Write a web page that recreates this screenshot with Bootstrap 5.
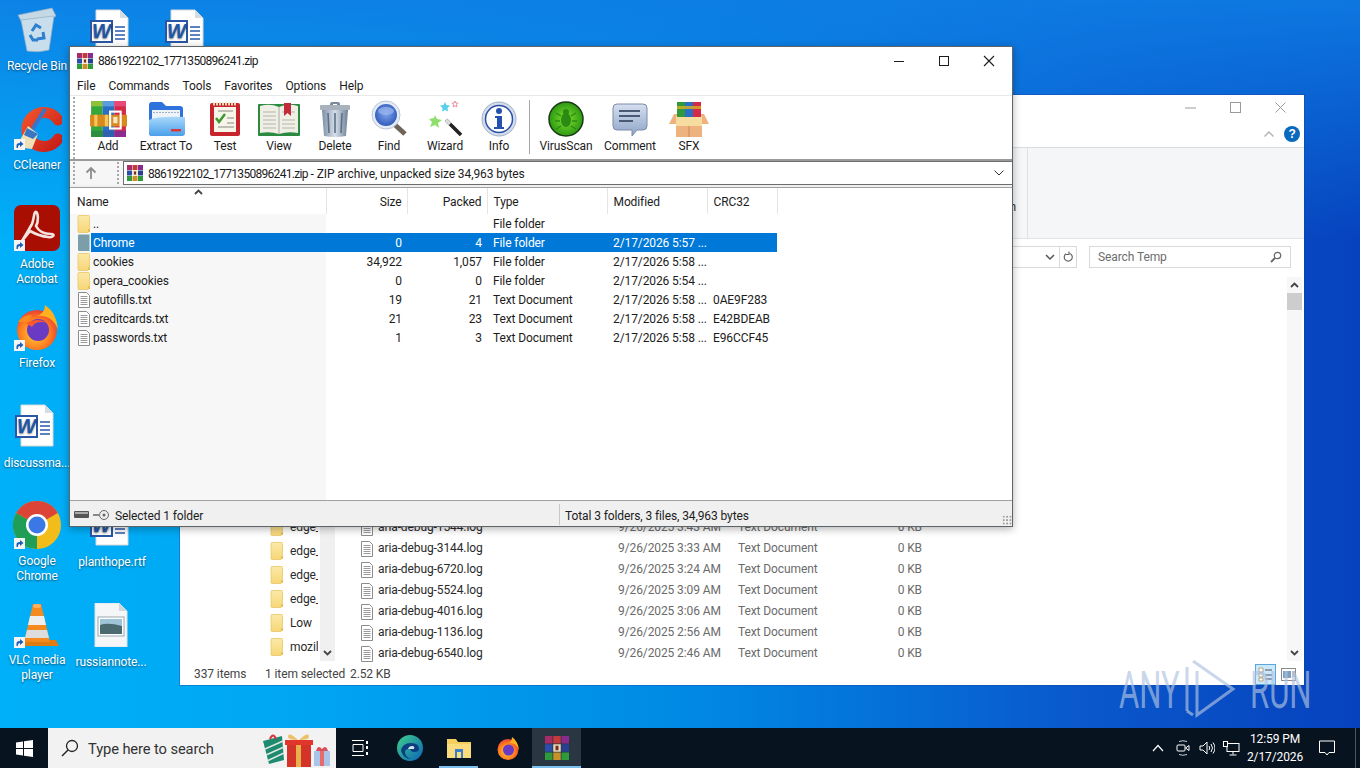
<!DOCTYPE html>
<html lang="en">
<head>
<meta charset="UTF-8">
<meta name="viewport" content="width=device-width, initial-scale=1.0">
<title>8861922102_1771350896241.zip</title>
<link href="https://cdn.jsdelivr.net/npm/bootstrap@5.3.2/dist/css/bootstrap.min.css" rel="stylesheet">
<style>
html, body { margin: 0; height: 100%; overflow: hidden; }
body { font-family: Roboto, "Noto Sans", sans-serif; font-size: 12px; line-height: 1.25; color: #1c1c1c; letter-spacing: -.1px; }
svg { flex-shrink: 0; }
.zipname { letter-spacing: -.7px; }
.screen { position: relative; width: 1360px; height: 768px; overflow: hidden;
  background: linear-gradient(90deg, #00b0f8 0, #00a6f2 300px, #0088e4 700px, #0a58cc 1080px, #0642bd 1360px); }
.topshade { position: absolute; left: 0; top: 0; right: 0; height: 240px; background: linear-gradient(180deg, rgba(14,125,228,.9), rgba(14,125,228,0)); }

/* desktop icons */
.dicon { position: absolute; width: 74px; color: #fff; text-align: center; line-height: 15px; text-shadow: 0 1px 2px rgba(0,0,0,.55); }
.dicon svg { display: block; margin: 0 auto 6px; }
.d-chrome svg, .d-vlc svg, .d-plan svg, .d-russ svg { margin-bottom: 5px; }
.d-recycle { left: 0; top: 7px; } .d-cclean { left: 0; top: 106px; } .d-acro { left: 0; top: 205px; }
.d-ff { left: 0; top: 304px; } .d-disc { left: 0; top: 404px; } .d-chrome { left: 0; top: 501px; }
.d-vlc { left: 0; top: 602px; } .d-w1 { left: 75px; top: 9px; } .d-w2 { left: 150px; top: 9px; }
.d-plan { left: 75px; top: 503px; } .d-russ { left: 74px; top: 603px; }

/* explorer behind */
.xwin { position: absolute; left: 180px; top: 95px; width: 1124px; height: 590px; background: #fff; box-shadow: 0 0 0 1px rgba(20,60,150,.35); }
.xtitle { height: 25px; padding-right: 18px; gap: 34px; }
.xtabs { height: 28px; border-bottom: 1px solid #dadbdc; padding-right: 4px; gap: 10px; }
.xhelp { width: 16px; height: 16px; border-radius: 50%; background: #0a68bd; color: #fff; font: bold 12px/16px "Liberation Sans", sans-serif; text-align: center; }
.xribbon { height: 91px; background: #f5f6f7; border-bottom: 1px solid #e2e3e4; }
.xribbon-frag { width: 847px; text-align: right; padding: 52px 11px 0 0; color: #333; }
.xribbon-sep { width: 1px; background: #e0e1e2; }
.xaddr { height: 38px; padding: 7px 13px 0 0; }
.xaddr-box { width: 66px; height: 22px; border: 1px solid #d9d9d9; border-left: 0; }
.xrefresh { width: 17px; border-left: 1px solid #d9d9d9; }
.xsearch { width: 202px; height: 22px; margin-left: 12px; border: 1px solid #d9d9d9; padding: 0 8px; color: #6d6d6d; }
.xbody { height: 387px; }
.xtree { width: 140px; padding: 0 2px 5px 0; }
.xtree-row { height: 24px; padding-left: 90px; gap: 6px; white-space: nowrap; overflow: hidden; color: #2a2a2a; }
.xscroll-v { width: 15px; background: #f0f0f0; margin-bottom: 3px; }
.xfiles { width: 771px; padding-bottom: 0; }
.xfile { height: 21px; color: #6b6b6b; white-space: nowrap; }
.xfile-name { width: 283px; padding-left: 25px; gap: 4px; color: #2a2a2a; }
.xfile-date { width: 120px; } .xfile-type { width: 140px; }
.xfile-size { width: 44px; text-align: right; }
.xscroll-main { width: 15px; margin-left: auto; margin-right: 2px; margin-bottom: 3px; background: #f7f7f7; }
.xthumb { width: 15px; height: 17px; background: #cdcdcd; }
.xarrow { height: 16px; }
.xstatus { height: 21px; padding-left: 14px; color: #444; white-space: nowrap; }
.xs-a { width: 71px; } .xs-b { width: 85px; }
.xview { margin-left: auto; margin-right: 8px; gap: 4px; }
.xview-on { width: 21px; height: 21px; background: #cce8ff; border: 1px solid #5aa8d8; }
.xview-off { width: 16px; height: 21px; }

/* winrar window */
.rwin { position: absolute; left: 69px; top: 46px; width: 944px; height: 481px; background: #f0f0f0; border: 1px solid #5f6468; box-shadow: 0 2px 8px rgba(0,0,0,.3); }
.rtitle { height: 27px; background: #fff; padding: 0 16px 0 7px; gap: 5px; }
.rtitle > span { padding-top: 2px; }
.rctrls { gap: 31px; }
.rmenu { height: 22px; background: #fff; padding: 4px 0 0 7px; gap: 13px; border-bottom: 1px solid #e8e8e8; }
.rtools { height: 65px; padding-left: 15px; border-bottom: 2px solid #9a9a9a;
  background: #fff radial-gradient(circle, #a8a8a8 .8px, transparent 1px) 3px 0 / 2px 4px repeat-y;
  display: grid; grid-template-columns: 46px 70px 48px 60px 52px 56px 56px 52px 10px 62px 66px 52px; }
.rtool { text-align: center; padding-top: 4px; white-space: nowrap; }
.rtool svg { display: block; margin: 0 auto; height: 38px; width: 38px; }
.rtool .rwide { width: 44px; margin-left: 50%; transform: translateX(-50%); }
.rtool span { display: block; line-height: 15px; margin-top: 1px; }
.rsep { width: 1px; height: 54px; margin: 4px 0 0 4px; background: #a8a8a8; }
.raddr { height: 24px; background: #f6f6f6; }
.rup { width: 53px; padding: 4px 0 0 15px; background: radial-gradient(circle, #a8a8a8 .8px, transparent 1px) 47px 0 / 2px 4px repeat-y, radial-gradient(circle, #a8a8a8 .8px, transparent 1px) 3px 0 / 2px 4px repeat-y; }
.rfield { flex: 1; height: 24px; background: #fff; border: 1px solid #6d6d6d; border-right: 0; padding: 0 8px 0 3px; gap: 5px; }
.rfield > span { padding-top: 2px; }
.rgap { height: 3px; background: #f0f0f0; border-bottom: 1px solid #a0a0a0; }
.rlist { height: 313px; background: linear-gradient(90deg, #f7f7f7 256px, #fff 256px); border-bottom: 1px solid #a0a0a0; }
.rlist table { width: 707px; table-layout: fixed; margin: 0; --bs-table-bg: transparent; color: #1c1c1c; }
.rlist th, .rlist td { height: 19px; padding: 1px 5px 0 6px; font-weight: 400; border: 0; line-height: 18px; white-space: nowrap; overflow: hidden; vertical-align: middle; color: #1c1c1c; box-shadow: none; background: transparent; }
.rlist td.rname { padding-top: 0; }
.rlist thead th { height: 26px; padding-top: 2px; background: #fff; border-right: 1px solid #e5e5e5; position: relative; }
.rname { padding-left: 7px !important; }
.rname-in { gap: 2px; height: 19px; }
.c-name { width: 256px; } .c-size { width: 81px; } .c-pack { width: 80px; } .c-type { width: 120px; } .c-mod { width: 100px; } .c-crc { width: 70px; }
.rlist .rsel td { background: #0078d7; color: #fff; }
.rlist .rsel td.rname { background: linear-gradient(90deg, transparent 21px, #0078d7 21px); }
.rsort { position: absolute; left: 124px; top: 1px; }
.rstatus { height: 24px; background: #f0f0f0; padding-top: 3px; }
.rst-a { width: 490px; padding-left: 4px; gap: 5px; border-right: 1px solid #c8c8c8; height: 100%; }
.rst-a span { padding-top: 4px; }
.rst-b { padding: 4px 0 0 5px; }
.rgrip { margin-left: auto; width: 10px; height: 10px; align-self: flex-end; background: radial-gradient(circle, #9a9a9a 1px, transparent 1.2px) 0 0 / 3.4px 3.4px; }

/* taskbar */
.tbar { position: absolute; left: 0; bottom: 0; width: 1360px; height: 40px; background: #07131f; color: #fff; }
.tstart { width: 48px; }
.tsearch { width: 288px; height: 40px; background: #f2f2f2; color: #333; font-size: 14.7px; padding-left: 13px; gap: 9px; position: relative; }
.tsearch > span { padding-top: 2px; }
.tgift { position: absolute; right: 2px; top: 3px; }
.tapp { width: 49px; height: 40px; position: relative; }
.tact::after { content: ""; position: absolute; left: 5px; right: 5px; bottom: 0; height: 2px; background: #7cc0f0; }
.tcur { background: #2a3742; }
.tcur::after { left: 0; right: 0; }
.ttray { margin-left: auto; height: 40px; }
.tico { width: 24.5px; }
.tclock { width: 62px; text-align: center; line-height: 18px; font-size: 12px; }
.tnote { width: 42px; }
.tend { width: 5px; height: 40px; border-left: 1px solid #4a5560; margin-left: 7px; }

/* watermark */
.wm { position: absolute; left: 1119px; top: 655px; width: 192px; height: 66px; color: rgba(175,195,225,.66); }
.wm-t { position: absolute; top: 8px; font: 400 52px/56px Roboto, sans-serif; transform: scaleX(.6); transform-origin: 0 50%; white-space: nowrap; }
.wm-l { left: 0; } .wm-r { left: 131px; }
.wm svg { position: absolute; left: 56px; top: 0; }
</style>
</head>
<body>
<!-- shared gradients and icons -->
<svg width="0" height="0" class="position-absolute">
  <defs>
    <linearGradient id="gFolder" x1="0" y1="0" x2="0" y2="1"><stop offset="0" stop-color="#fbe9a8"/><stop offset="1" stop-color="#f7d678"/></linearGradient>
    <linearGradient id="gBlue" x1="0" y1="0" x2="0" y2="1"><stop offset="0" stop-color="#a8d8fb"/><stop offset="1" stop-color="#4aa0ea"/></linearGradient>
    <linearGradient id="gBin" x1="0" y1="0" x2="1" y2="0"><stop offset="0" stop-color="#7d8fa5"/><stop offset=".5" stop-color="#d5dfe9"/><stop offset="1" stop-color="#6f8299"/></linearGradient>
    <radialGradient id="gLens" cx=".5" cy=".45" r=".6"><stop offset="0" stop-color="#7fa4ec"/><stop offset="1" stop-color="#2a55b8"/></radialGradient>
    <radialGradient id="gGreen" cx=".5" cy=".5" r=".6"><stop offset="0" stop-color="#7fe22a"/><stop offset="1" stop-color="#1c8a10"/></radialGradient>
    <linearGradient id="gCmt" x1="0" y1="0" x2="0" y2="1"><stop offset="0" stop-color="#d5dff0"/><stop offset="1" stop-color="#8ea4c6"/></linearGradient>
    <radialGradient id="gFox" cx=".45" cy=".6" r=".65"><stop offset="0" stop-color="#ffd23a"/><stop offset=".6" stop-color="#ff7a1f"/><stop offset="1" stop-color="#e5303c"/></radialGradient>
    <linearGradient id="gEdge" x1="0" y1="0" x2="1" y2="1"><stop offset="0" stop-color="#3fd08a"/><stop offset="1" stop-color="#0a62b8"/></linearGradient>
    <linearGradient id="gCc" x1="0" y1="0" x2="1" y2="1"><stop offset="0" stop-color="#f0502a"/><stop offset="1" stop-color="#c81e18"/></linearGradient>

    <symbol id="iRar" viewBox="0 0 36 36">
      <rect x="2" y="1" width="11" height="34" fill="#35a63a"/><rect x="13" y="1" width="11" height="34" fill="#2a6fc4"/><rect x="24" y="1" width="11" height="34" fill="#d42a4a"/>
      <rect x="2" y="1" width="11" height="5" fill="#8fc23a"/><rect x="13" y="1" width="11" height="5" fill="#5a9ee0"/><rect x="24" y="1" width="11" height="5" fill="#ea4a7a"/>
      <rect x="2" y="29" width="11" height="6" fill="#2c8f40"/><rect x="13" y="29" width="11" height="6" fill="#2e62b0"/><rect x="24" y="29" width="11" height="6" fill="#8c2a90"/>
      <rect x="1" y="14" width="35" height="11" fill="#d98a1e"/><rect x="5" y="14" width="3" height="11" fill="#f5c65a"/><rect x="15" y="14" width="3" height="11" fill="#f5c65a"/>
      <rect x="20" y="11" width="10" height="16" fill="none" stroke="#fff" stroke-width="2"/><rect x="23" y="16" width="4" height="6" fill="#f5e6c8"/>
    </symbol>
    <symbol id="iRarS" viewBox="0 0 16 16">
      <rect x="0" y="0" width="5" height="5" fill="#a82a66"/><rect x="5.5" y="0" width="5" height="5" fill="#c23a3a"/><rect x="11" y="0" width="5" height="5" fill="#8a2a8c"/>
      <rect x="0" y="5.5" width="5" height="5" fill="#2b4fa8"/><rect x="5.5" y="5.5" width="5" height="5" fill="#e8d9b8"/><rect x="11" y="5.5" width="5" height="5" fill="#27408f"/>
      <rect x="0" y="11" width="5" height="5" fill="#2f9a3c"/><rect x="5.5" y="11" width="5" height="5" fill="#c9902a"/><rect x="11" y="11" width="5" height="5" fill="#2f9a3c"/>
      <rect x="7" y="6.5" width="2" height="3" fill="#7a2a20"/>
    </symbol>
    <symbol id="iFolder" viewBox="0 0 14 18">
      <path d="M1 1.5Q1 .5 2 .5h9.5q1 0 1 1v13.5l-1.5 1v1.5H2q-1 0-1-1z" fill="url(#gFolder)" stroke="#eac766" stroke-width=".8"/>
      <rect x="11" y="14" width="2" height="3" fill="#e8c058"/>
    </symbol>
    <symbol id="iFolderSel" viewBox="0 0 14 18">
      <path d="M1 1.500Q1 .5 2 .5h10.500V17H2q-1 0-1-1z" fill="#7c9ea8"/>
    </symbol>
    <symbol id="iTxt" viewBox="0 0 14 16">
      <path d="M1.500 .5h8l3 3v12h-11z" fill="#fff" stroke="#8c8c8c"/>
      <path d="M3.500 4.500h7M3.500 6.500h7M3.500 8.500h7M3.500 10.500h7M3.500 12.500h7" stroke="#9a9a9a"/>
    </symbol>
    <symbol id="iWord" viewBox="0 0 44 44">
      <path d="M6 1h24l8 8v33H6z" fill="#fff" stroke="#d8d8d8"/><path d="M30 1v8h8z" fill="#d6dce4"/>
      <path d="M25 18h10M25 22h10M25 26h10M25 30h10" stroke="#2a5aa8" stroke-width="1.300"/>
      <rect x="1" y="12" width="21" height="21" fill="#fff" stroke="#2a56a6" stroke-width="2"/>
      <text x="11.500" y="29" text-anchor="middle" font-family="Liberation Sans, sans-serif" font-size="20" font-weight="700" font-style="italic" fill="#1e56a8">W</text>
    </symbol>
    <symbol id="iLink" viewBox="0 0 11 11">
      <rect width="11" height="11" fill="#f4f4f4"/><path d="M2.500 9V6.500Q2.500 4 5.500 4H6V2l3.500 3L6 8V6h-.5Q4 6 3.800 9z" fill="#1e5fb8"/>
    </symbol>
    <symbol id="iChevD" viewBox="0 0 9 6"><path d="M1 1l3.500 3.500L8 1" fill="none" stroke="#444" stroke-width="1.800"/></symbol>
    <symbol id="iChevU" viewBox="0 0 9 6"><path d="M1 5l3.500-3.500L8 5" fill="none" stroke="#444" stroke-width="1.800"/></symbol>
  </defs>
</svg>

<div class="screen">
  <div class="topshade"></div>

  <!-- desktop shortcuts -->
  <div class="dicon d-recycle">
    <svg width="44" height="46" viewBox="0 0 44 46"><path d="M3 8L37 1l4 8-3 2L7 16z" fill="#c4d8e6" stroke="#8ea8bc" stroke-width=".6"/><path d="M6 13l33-4-5 34q-10 3-22 1z" fill="#c9deec" stroke="#93aec2" stroke-width=".7"/><path d="M17 24l4-6 5 3M28 25l1 6-7 1M15 28l3 5h5" fill="none" stroke="#2f7fd0" stroke-width="3"/></svg>
    Recycle Bin
  </div>
  <div class="dicon d-cclean">
    <svg width="50" height="46" viewBox="0 0 50 46"><path d="M46 14A17 17 0 1 0 46 33" fill="none" stroke="url(#gCc)" stroke-width="11" stroke-linecap="round"/><path d="M33 3L20 24" stroke="#3f72c4" stroke-width="4"/><path d="M16 20l10 8-6 15-16-2z" fill="#efe0b8"/><path d="M15 22l11 6-5 5-9-4z" fill="#3a76c2"/></svg>
    CCleaner
  </div>
  <div class="dicon d-acro">
    <svg width="46" height="46" viewBox="0 0 46 46"><rect width="46" height="46" rx="7" fill="#a90e02"/><path d="M8 36q5-8 10-17c2-5 2-13 4-12s3 9 0 14q4 8 15 8c5 0 2 4-3 3q-9-1-18-6-8 10-8 10z" fill="none" stroke="#f4e4e0" stroke-width="2.600"/></svg>
    Adobe<br>Acrobat
  </div>
  <div class="dicon d-ff">
    <svg width="46" height="46" viewBox="0 0 46 46"><circle cx="23" cy="26" r="20" fill="url(#gFox)"/><path d="M31 1q12 8 13 25-6-16-22-14 9-2 9-11z" fill="#ffb01f"/><path d="M4 18q6-8 14-7l-4 7z" fill="#ff8a1f"/><circle cx="24" cy="26" r="11" fill="#6a3bc2"/><path d="M12 19q12-6 21 0-11-3-15 4z" fill="#ff5a2a"/></svg>
    Firefox
  </div>
  <div class="dicon d-disc">
    <svg width="44" height="44" viewBox="0 0 44 44"><use href="#iWord"/></svg>
    <span class="d-block mt-2">discussma...</span>
  </div>
  <div class="dicon d-chrome">
    <svg width="48" height="48" viewBox="0 0 48 48"><circle cx="24" cy="24" r="24" fill="#f2bd1a"/><path d="M24 24L3.200 12A24 24 0 0 1 44.800 12z" fill="#dc4437"/><path d="M24 24L3.200 12A24 24 0 0 0 24 48z" fill="#1f9e57"/><circle cx="24" cy="24" r="11" fill="#fff"/><circle cx="24" cy="24" r="8.500" fill="#3b78e7"/></svg>
    Google<br>Chrome
  </div>
  <div class="dicon d-vlc">
    <svg width="46" height="46" viewBox="0 0 46 46"><path d="M4 38h38l3 6H1z" fill="#e07c10"/><path d="M19 2h8l9 38H10z" fill="#f58a1f"/><path d="M16 14h14l2 9H14z" fill="#eee"/><path d="M13 28h20l2 8H11z" fill="#ddd"/><ellipse cx="23" cy="4" rx="4" ry="2" fill="#ffb060"/></svg>
    VLC media<br>player
  </div>
  <div class="dicon d-w1"><svg width="44" height="44" viewBox="0 0 44 44"><use href="#iWord"/></svg></div>
  <div class="dicon d-w2"><svg width="44" height="44" viewBox="0 0 44 44"><use href="#iWord"/></svg></div>
  <div class="dicon d-plan"><svg width="44" height="44" viewBox="0 0 44 44"><use href="#iWord"/></svg><span class="d-block mt-2">planthope.rtf</span></div>
  <div class="dicon d-russ">
    <svg width="34" height="44" viewBox="0 0 34 44"><path d="M1 0h24l8 8v36H1z" fill="#f4f6f8" stroke="#dfe3e6"/><path d="M25 0v8h8z" fill="#cfd6dc"/><rect x="4" y="14" width="26" height="19" fill="#fff" stroke="#9aa8b2"/><rect x="6" y="16" width="22" height="7" fill="#9ec4d8"/><path d="M6 22q8-3 22 1v8H6z" fill="#4a6a70"/></svg>
    <span class="d-block mt-2">russiannote...</span>
  </div>

  <!-- shortcut arrows over the desktop icons -->
  <svg class="position-absolute top-0 start-0" width="40" height="768" viewBox="0 0 40 768">
    <use href="#iLink" x="14" y="139" width="11" height="11"/>
    <use href="#iLink" x="14" y="240" width="11" height="11"/>
    <use href="#iLink" x="14" y="340" width="11" height="11"/>
    <use href="#iLink" x="14" y="538" width="11" height="11"/>
    <use href="#iLink" x="14" y="637" width="11" height="11"/>
  </svg>

  <!-- explorer window behind -->
  <div class="xwin d-flex flex-column">
    <div class="xtitle d-flex align-items-center justify-content-end">
      <svg width="11" height="11" viewBox="0 0 11 11"><path d="M0 6h11" stroke="#9a9a9a"/></svg>
      <svg width="11" height="11" viewBox="0 0 11 11"><rect x=".5" y=".5" width="10" height="10" fill="none" stroke="#9a9a9a"/></svg>
      <svg width="11" height="11" viewBox="0 0 11 11"><path d="M.5.5l10 10M10.500.5l-10 10" stroke="#9a9a9a"/></svg>
    </div>
    <div class="xtabs d-flex align-items-center justify-content-end">
      <svg width="10" height="6" viewBox="0 0 10 6"><path d="M.5 5.500L5 1l4.500 4.500" fill="none" stroke="#b5b5b5" stroke-width="1.500"/></svg>
      <div class="xhelp">?</div>
    </div>
    <div class="xribbon d-flex"><div class="xribbon-frag">h</div><div class="xribbon-sep"></div></div>
    <div class="xaddr d-flex justify-content-end">
      <div class="xaddr-box d-flex align-items-center justify-content-end">
        <svg class="me-1" width="10" height="7" viewBox="0 0 10 7"><path d="M1 1l4 4 4-4" fill="none" stroke="#555" stroke-width="1.500"/></svg>
        <div class="xrefresh h-100 d-flex align-items-center justify-content-center">
          <svg width="11" height="12" viewBox="0 0 11 12"><path d="M7 2.500a4 4 0 1 1-4 .3M6 .5v3h-3" fill="none" stroke="#666" stroke-width="1.200"/></svg>
        </div>
      </div>
      <div class="xsearch d-flex align-items-center justify-content-between">
        <span>Search Temp</span>
        <svg width="12" height="12" viewBox="0 0 12 12"><circle cx="7.500" cy="4.500" r="3.200" fill="none" stroke="#666" stroke-width="1.200"/><path d="M5 7l-4 4" stroke="#666" stroke-width="1.800"/></svg>
      </div>
    </div>
    <div class="xbody d-flex">
      <div class="xtree d-flex flex-column justify-content-end">
        <div class="xtree-row d-flex align-items-center"><svg width="14" height="18"><use href="#iFolder"/></svg>edge_</div>
        <div class="xtree-row d-flex align-items-center"><svg width="14" height="18"><use href="#iFolder"/></svg>edge_</div>
        <div class="xtree-row d-flex align-items-center"><svg width="14" height="18"><use href="#iFolder"/></svg>edge_</div>
        <div class="xtree-row d-flex align-items-center"><svg width="14" height="18"><use href="#iFolder"/></svg>edge_</div>
        <div class="xtree-row d-flex align-items-center"><svg width="14" height="18"><use href="#iFolder"/></svg>Low</div>
        <div class="xtree-row d-flex align-items-center"><svg width="14" height="18"><use href="#iFolder"/></svg>mozil</div>
      </div>
      <div class="xscroll-v d-flex flex-column justify-content-end"><div class="xarrow d-flex align-items-center justify-content-center"><svg width="9" height="6"><use href="#iChevD"/></svg></div></div>
      <div class="xfiles d-flex flex-column justify-content-end">
        <div class="xfile d-flex align-items-center"><div class="xfile-name d-flex align-items-center"><svg width="14" height="16"><use href="#iTxt"/></svg>aria-debug-1544.log</div><div class="xfile-date">9/26/2025 3:43 AM</div><div class="xfile-type">Text Document</div><div class="xfile-size">0 KB</div></div>
        <div class="xfile d-flex align-items-center"><div class="xfile-name d-flex align-items-center"><svg width="14" height="16"><use href="#iTxt"/></svg>aria-debug-3144.log</div><div class="xfile-date">9/26/2025 3:33 AM</div><div class="xfile-type">Text Document</div><div class="xfile-size">0 KB</div></div>
        <div class="xfile d-flex align-items-center"><div class="xfile-name d-flex align-items-center"><svg width="14" height="16"><use href="#iTxt"/></svg>aria-debug-6720.log</div><div class="xfile-date">9/26/2025 3:24 AM</div><div class="xfile-type">Text Document</div><div class="xfile-size">0 KB</div></div>
        <div class="xfile d-flex align-items-center"><div class="xfile-name d-flex align-items-center"><svg width="14" height="16"><use href="#iTxt"/></svg>aria-debug-5524.log</div><div class="xfile-date">9/26/2025 3:09 AM</div><div class="xfile-type">Text Document</div><div class="xfile-size">0 KB</div></div>
        <div class="xfile d-flex align-items-center"><div class="xfile-name d-flex align-items-center"><svg width="14" height="16"><use href="#iTxt"/></svg>aria-debug-4016.log</div><div class="xfile-date">9/26/2025 3:06 AM</div><div class="xfile-type">Text Document</div><div class="xfile-size">0 KB</div></div>
        <div class="xfile d-flex align-items-center"><div class="xfile-name d-flex align-items-center"><svg width="14" height="16"><use href="#iTxt"/></svg>aria-debug-1136.log</div><div class="xfile-date">9/26/2025 2:56 AM</div><div class="xfile-type">Text Document</div><div class="xfile-size">0 KB</div></div>
        <div class="xfile d-flex align-items-center"><div class="xfile-name d-flex align-items-center"><svg width="14" height="16"><use href="#iTxt"/></svg>aria-debug-6540.log</div><div class="xfile-date">9/26/2025 2:46 AM</div><div class="xfile-type">Text Document</div><div class="xfile-size">0 KB</div></div>
      </div>
      <div class="xscroll-main d-flex flex-column">
        <div class="xarrow d-flex align-items-center justify-content-center"><svg width="9" height="6"><use href="#iChevU"/></svg></div>
        <div class="xthumb"></div>
        <div class="flex-grow-1"></div>
        <div class="xarrow d-flex align-items-center justify-content-center"><svg width="9" height="6"><use href="#iChevD"/></svg></div>
      </div>
    </div>
    <div class="xstatus d-flex align-items-center">
      <div class="xs-a">337 items</div><div class="xs-b">1 item selected</div><div>2.52 KB</div>
      <div class="xview d-flex">
        <div class="xview-on d-flex align-items-center justify-content-center"><svg width="15" height="15" viewBox="0 0 15 15"><path d="M1 1h4v4H1zM1 6h4v4H1zM1 11h4v3H1z" fill="#fff" stroke="#a08a50" stroke-width=".7"/><path d="M7 3h7M7 8h7M7 12h7" stroke="#555"/></svg></div>
        <div class="xview-off d-flex align-items-center justify-content-center"><svg width="15" height="13" viewBox="0 0 15 13"><rect x=".5" y=".5" width="14" height="12" fill="#fff" stroke="#8a8a8a"/><rect x="2" y="3" width="8" height="7" fill="#7a9fc0"/><path d="M11 4h3M11 6h3M11 8h3" stroke="#777"/></svg></div>
      </div>
    </div>
  </div>

  <!-- winrar window -->
  <div class="rwin d-flex flex-column">
    <div class="rtitle d-flex align-items-center">
      <svg width="16" height="16"><use href="#iRarS"/></svg>
      <span class="zipname">8861922102_1771350896241.zip</span>
      <div class="rctrls d-flex align-items-center ms-auto">
        <svg width="14" height="14" viewBox="0 0 14 14"><path d="M2 7.500h10" stroke="#1c1c1c"/></svg>
        <svg width="14" height="14" viewBox="0 0 14 14"><rect x="2.500" y="2.500" width="9" height="9" fill="none" stroke="#1c1c1c"/></svg>
        <svg width="14" height="14" viewBox="0 0 14 14"><path d="M2 2l10 10M12 2L2 12" stroke="#1c1c1c" stroke-width="1.100"/></svg>
      </div>
    </div>
    <div class="rmenu d-flex align-items-center">
      <span>File</span><span>Commands</span><span>Tools</span><span>Favorites</span><span>Options</span><span>Help</span>
    </div>
    <div class="rtools">
      <div class="rtool"><svg viewBox="0 0 36 36"><use href="#iRar"/></svg><span>Add</span></div>
      <div class="rtool"><svg viewBox="0 0 38 38"><path d="M2 5q0-3 3-3h10l4 4h14q3 0 3 3v24q0 3-3 3H5q-3 0-3-3z" fill="#2e72dc"/><rect x="5" y="10" width="28" height="9" fill="#eef3f8"/><path d="M6 12.500h26" stroke="#9fb4c8" stroke-dasharray="2 1"/><path d="M2 20q8-4 36-3v16q0 3-3 3H5q-3 0-3-3z" fill="url(#gBlue)"/><rect x="24" y="29" width="10" height="2.500" fill="#d8363a"/></svg><span>Extract To</span></div>
      <div class="rtool"><svg viewBox="0 0 38 38"><rect x="4" y="3" width="30" height="33" rx="2" fill="#c8242e"/><rect x="8" y="7" width="22" height="25" fill="#f7f4ea"/><path d="M7 4h24" stroke="#e8d8b0" stroke-width="3" stroke-dasharray="2 1"/><path d="M10 18l3 4 6-8" fill="none" stroke="#3a9a30" stroke-width="2.500"/><path d="M12 11h15M21 18h7M21 23h7M12 27h16" stroke="#8a8a80"/></svg><span>Test</span></div>
      <div class="rtool"><svg class="rwide" viewBox="0 0 44 38"><rect x="1" y="4" width="42" height="32" rx="1" fill="#2a8a40"/><path d="M3 6q10-3 19 1 9-4 19-1v27q-10-2-19 1-9-3-19-1z" fill="#f0efe6"/><path d="M22 7v27" stroke="#aaa"/><path d="M6 12h13M6 16h13M6 20h13M6 24h13M6 28h13M25 12h13M25 20h13M25 24h13M25 28h13" stroke="#b5b5ac"/><path d="M27 3h7v13l-3.500-3-3.500 3z" fill="#c42a3a"/></svg><span>View</span></div>
      <div class="rtool"><svg viewBox="0 0 38 38"><path d="M14 4q0-2 2-2h6q2 0 2 2v1h-3V4h-4v1h-3z" fill="#7d8a98"/><rect x="4" y="5" width="30" height="5" rx="1" fill="#a8b2bd"/><path d="M6 10h26l-2 26q-11 2-22 0z" fill="url(#gBin)"/><path d="M12 13l1 20M19 13v20M26 13l-1 20" stroke="#5e7086" stroke-width="1.600"/></svg><span>Delete</span></div>
      <div class="rtool"><svg viewBox="0 0 38 38"><path d="M24 24l11 10" stroke="#6e6458" stroke-width="5"/><circle cx="16" cy="15" r="14" fill="#e5ecf5" stroke="#b8c6da"/><circle cx="16" cy="15" r="11" fill="url(#gLens)"/><ellipse cx="16" cy="11" rx="8" ry="4" fill="#9db8ef" opacity=".7"/></svg><span>Find</span></div>
      <div class="rtool"><svg viewBox="0 0 38 38"><path d="M20 20l15 15" stroke="#222" stroke-width="3.500"/><path d="M20 20l4 4" stroke="#ddd" stroke-width="3.500"/><path d="M9 15l2 4 5 1-4 3 1 5-4-3-5 2 2-5-3-3 5-1z" fill="#8fe06a"/><path d="M19 2l1.500 3 3.500.5-2.500 2.500.5 3.500-3-1.500-3 1.500.5-3.500-2.500-2.500 3.500-.5z" fill="#5ad0ea"/><path d="M29 1l1 2 2 .3-1.500 1.500.3 2-1.800-1-1.800 1 .3-2L26 3.300l2-.3z" fill="none" stroke="#e88a9a"/></svg><span>Wizard</span></div>
      <div class="rtool"><svg viewBox="0 0 38 38"><circle cx="19" cy="19" r="17" fill="#d5ddea" stroke="#9fb0c8"/><circle cx="19" cy="19" r="13.500" fill="#fff" stroke="#2a4fa8" stroke-width="1.500"/><circle cx="19" cy="11" r="3" fill="#2450b0"/><path d="M15 16h7v11h2v2H14v-2h3V18h-2z" fill="#2450b0"/></svg><span>Info</span></div>
      <div class="rsep"></div>
      <div class="rtool"><svg viewBox="0 0 38 38"><circle cx="19" cy="19" r="17" fill="url(#gGreen)" stroke="#1a3a14" stroke-width="1.500"/><ellipse cx="19" cy="20" rx="5" ry="7" fill="#2a8a14"/><circle cx="19" cy="12" r="3" fill="#2a8a14"/><path d="M14 16l-5-3M24 16l5-3M13 21H8M25 21h5M14 26l-5 3M24 26l5 3" stroke="#2a8a14" stroke-width="1.400"/></svg><span>VirusScan</span></div>
      <div class="rtool"><svg viewBox="0 0 38 38"><path d="M6 4h26q4 0 4 4v18q0 4-4 4h-6l-5 6v-6H6q-4 0-4-4V8q0-4 4-4z" fill="url(#gCmt)" stroke="#7d8ca8"/><path d="M8 11h21M8 16h21M8 21h14" stroke="#4a5a74" stroke-width="1.800"/></svg><span>Comment</span></div>
      <div class="rtool"><svg class="rwide" viewBox="0 0 42 38"><path d="M6 14L1 24h7v13h26V24h7l-5-10z" fill="#eeb27e"/><path d="M8 16h26v10H8z" fill="#f7dca0"/><rect x="9" y="2" width="8" height="15" fill="#2f9a3c"/><rect x="17" y="2" width="8" height="15" fill="#2a6fc4"/><rect x="25" y="2" width="8" height="15" fill="#d42a4a"/><rect x="9" y="6" width="24" height="3" fill="#d9b020" opacity=".8"/><path d="M21 26v11" stroke="#c98a58"/></svg><span>SFX</span></div>
    </div>
    <div class="raddr d-flex">
      <div class="rup"><svg width="12" height="14" viewBox="0 0 12 14"><path d="M6 13V2M1.500 6.500L6 2l4.500 4.500" fill="none" stroke="#8c8c8c" stroke-width="1.800"/></svg></div>
      <div class="rfield d-flex align-items-center">
        <svg width="16" height="16"><use href="#iRarS"/></svg>
        <span><span class="zipname">8861922102_1771350896241.zip</span> - ZIP archive, unpacked size 34,963 bytes</span>
        <svg class="ms-auto" width="10" height="6" viewBox="0 0 10 6"><path d="M.5.5L5 5 9.500.5" fill="none" stroke="#333"/></svg>
      </div>
    </div>
    <div class="rgap"></div>
    <div class="rlist">
      <table class="table">
        <colgroup><col class="c-name"><col class="c-size"><col class="c-pack"><col class="c-type"><col class="c-mod"><col class="c-crc"></colgroup>
        <thead>
          <tr><th class="rname">Name<svg class="rsort" width="9" height="6"><use href="#iChevU"/></svg></th><th class="text-end">Size</th><th class="text-end">Packed</th><th>Type</th><th>Modified</th><th>CRC32</th></tr>
        </thead>
        <tbody>
          <tr><td class="rname"><div class="rname-in d-flex align-items-center"><svg width="14" height="18"><use href="#iFolder"/></svg><span>..</span></div></td><td></td><td></td><td>File folder</td><td></td><td></td></tr>
          <tr class="rsel"><td class="rname"><div class="rname-in d-flex align-items-center"><svg width="14" height="18"><use href="#iFolderSel"/></svg><span>Chrome</span></div></td><td class="text-end">0</td><td class="text-end">4</td><td>File folder</td><td>2/17/2026 5:57 ...</td><td></td></tr>
          <tr><td class="rname"><div class="rname-in d-flex align-items-center"><svg width="14" height="18"><use href="#iFolder"/></svg><span>cookies</span></div></td><td class="text-end">34,922</td><td class="text-end">1,057</td><td>File folder</td><td>2/17/2026 5:58 ...</td><td></td></tr>
          <tr><td class="rname"><div class="rname-in d-flex align-items-center"><svg width="14" height="18"><use href="#iFolder"/></svg><span>opera_cookies</span></div></td><td class="text-end">0</td><td class="text-end">0</td><td>File folder</td><td>2/17/2026 5:54 ...</td><td></td></tr>
          <tr><td class="rname"><div class="rname-in d-flex align-items-center"><svg width="14" height="16"><use href="#iTxt"/></svg><span>autofills.txt</span></div></td><td class="text-end">19</td><td class="text-end">21</td><td>Text Document</td><td>2/17/2026 5:58 ...</td><td>0AE9F283</td></tr>
          <tr><td class="rname"><div class="rname-in d-flex align-items-center"><svg width="14" height="16"><use href="#iTxt"/></svg><span>creditcards.txt</span></div></td><td class="text-end">21</td><td class="text-end">23</td><td>Text Document</td><td>2/17/2026 5:58 ...</td><td>E42BDEAB</td></tr>
          <tr><td class="rname"><div class="rname-in d-flex align-items-center"><svg width="14" height="16"><use href="#iTxt"/></svg><span>passwords.txt</span></div></td><td class="text-end">1</td><td class="text-end">3</td><td>Text Document</td><td>2/17/2026 5:58 ...</td><td>E96CCF45</td></tr>
        </tbody>
      </table>
    </div>
    <div class="rstatus d-flex align-items-center">
      <div class="rst-a d-flex align-items-center">
        <svg width="36" height="12" viewBox="0 0 36 12"><rect x="0" y="2" width="15" height="7" rx="1" fill="#555"/><rect x="1" y="3" width="13" height="2" fill="#aaa"/><circle cx="30" cy="6" r="4.500" fill="#eee" stroke="#666"/><circle cx="30" cy="6" r="1.500" fill="#666"/><path d="M19 5h7v2h-7z" fill="#888"/></svg>
        <span>Selected 1 folder</span>
      </div>
      <div class="rst-b">Total 3 folders, 3 files, 34,963 bytes</div>
      <div class="rgrip"></div>
    </div>
  </div>

  <!-- watermark -->
  <div class="wm">
    <span class="wm-t wm-l">ANY</span>
    <svg width="72" height="66" viewBox="0 0 72 66"><path d="M12 12v44M18 6l40 28-36 26V16" fill="none" stroke="currentColor" stroke-width="3"/><path d="M18 60l-6-4" stroke="currentColor" stroke-width="3"/></svg>
    <span class="wm-t wm-r">RUN</span>
  </div>

  <!-- taskbar -->
  <div class="tbar d-flex align-items-center">
    <div class="tstart d-flex align-items-center justify-content-center">
      <svg width="17" height="17" viewBox="0 0 17 17"><path d="M0 2.400L7 1.400V8H0zM8 1.300L17 0V8H8zM0 9h7v6.600l-7-1zM8 9h9v8l-9-1.300z" fill="#fff"/></svg>
    </div>
    <div class="tsearch d-flex align-items-center">
      <svg width="18" height="18" viewBox="0 0 18 18"><circle cx="11" cy="7" r="5.500" fill="none" stroke="#222" stroke-width="1.300"/><path d="M7 11l-6 6" stroke="#222" stroke-width="1.500"/></svg>
      <span>Type here to search</span>
      <svg class="tgift" width="72" height="36" viewBox="0 0 72 36">
        <path d="M1 10l19-5 2 24-15 4z" fill="#1e8a70"/><path d="M3 18l18-8M4 24l18-8M5 30l17-8" stroke="#dfe8e0" stroke-width="1.500"/><path d="M8 8q3-7 6 0" fill="none" stroke="#d8343a" stroke-width="2"/>
        <rect x="25" y="11" width="24" height="25" fill="#d4332a"/><rect x="34" y="11" width="5" height="25" fill="#e8b04a"/><rect x="23" y="9" width="28" height="5" fill="#e0362c"/><path d="M36 9Q26 0 26 6q0 3 10 3zM37 9q10-9 10-3 0 3-10 3z" fill="#edc06a"/>
        <rect x="52" y="20" width="16" height="15" fill="#a8c4e8"/><rect x="58" y="20" width="4" height="15" fill="#e86a6a"/><path d="M54 20q2-7 6-2 4-5 6 2z" fill="#d8505a"/>
      </svg>
    </div>
    <div class="tapp d-flex align-items-center justify-content-center">
      <svg width="17" height="16" viewBox="0 0 17 16"><path d="M0 .5h12M0 15.500h12M1 4.500h10v7H1z" fill="none" stroke="#fff"/><path d="M15 1v3M15 6v3M15 12v3" stroke="#fff" stroke-width="2"/></svg>
    </div>
    <div class="tapp d-flex align-items-center justify-content-center">
      <svg width="26" height="26" viewBox="0 0 26 26"><circle cx="13" cy="13" r="13" fill="url(#gEdge)"/><path d="M4 16q1-8 10-8 8 0 8 6 0 3-5 3-3 0-4-3 0 0-1 0-4 0-4 3 0 5 6 7Q7 24 4 16z" fill="#0b3f80"/><path d="M17 14h-6q1-3 4-3t2 3z" fill="#fff" opacity=".85"/></svg>
    </div>
    <div class="tapp tact d-flex align-items-center justify-content-center">
      <svg width="24" height="20" viewBox="0 0 24 20"><path d="M0 1h9l2 3h13v16H0z" fill="#f5cf5e"/><rect y="6" width="24" height="14" fill="#fbdc7c"/><rect x="8" y="11" width="8" height="9" fill="#3a7ecb"/><rect x="10" y="14" width="4" height="6" fill="#fbdc7c"/></svg>
    </div>
    <div class="tapp d-flex align-items-center justify-content-center">
      <svg width="24" height="24" viewBox="0 0 24 24"><circle cx="12" cy="13.500" r="10.500" fill="url(#gFox)"/><path d="M16 1q6 4 7 13-3-8-11-7 4-1 4-6z" fill="#ffb01f"/><circle cx="12.500" cy="14" r="5.500" fill="#6a3bc2"/></svg>
    </div>
    <div class="tapp tact tcur d-flex align-items-center justify-content-center">
      <svg width="24" height="24"><use href="#iRarS"/></svg>
    </div>
    <div class="ttray d-flex align-items-center">
      <div class="tico d-flex justify-content-center"><svg width="12" height="8" viewBox="0 0 12 8"><path d="M1 7l5-5.500L11 7" fill="none" stroke="#fff" stroke-width="1.200"/></svg></div>
      <div class="tico d-flex justify-content-center"><svg width="14" height="16" viewBox="0 0 14 16"><path d="M3 1.500Q7 0 11 1.500M3 14.500q4 1.500 8 0" fill="none" stroke="#ccc"/><rect x="1" y="5" width="8" height="6" rx="1" fill="none" stroke="#fff"/><path d="M9.500 8l3.500-2.500v5z" fill="none" stroke="#fff"/></svg></div>
      <div class="tico d-flex justify-content-center"><svg width="16" height="14" viewBox="0 0 16 14"><path d="M1 5h3l4-4v12L4 9H1z" fill="none" stroke="#fff"/><path d="M10 5q1.500 2 0 4M12 3q3 4 0 8M14 1.500q4 5.500 0 11" fill="none" stroke="#fff"/></svg></div>
      <div class="tico d-flex justify-content-center"><svg width="17" height="15" viewBox="0 0 17 15"><rect x="4" y="2.500" width="12" height="8" fill="none" stroke="#fff"/><rect x=".5" y=".5" width="4" height="5" fill="#07131f" stroke="#fff"/><path d="M10 10.500v3M6.500 14h7" stroke="#fff"/></svg></div>
      <div class="tclock"><div>12:59 PM</div><div>2/17/2026</div></div>
      <div class="tnote d-flex justify-content-center"><svg width="16" height="16" viewBox="0 0 16 16"><path d="M.5 1h15v11.500H10L8 15l-2-2.500H.5z" fill="none" stroke="#fff"/></svg></div>
      <div class="tend"></div>
    </div>
  </div>
</div>
<script src="https://cdn.jsdelivr.net/npm/bootstrap@5.3.2/dist/js/bootstrap.bundle.min.js"></script>
</body>
</html>
